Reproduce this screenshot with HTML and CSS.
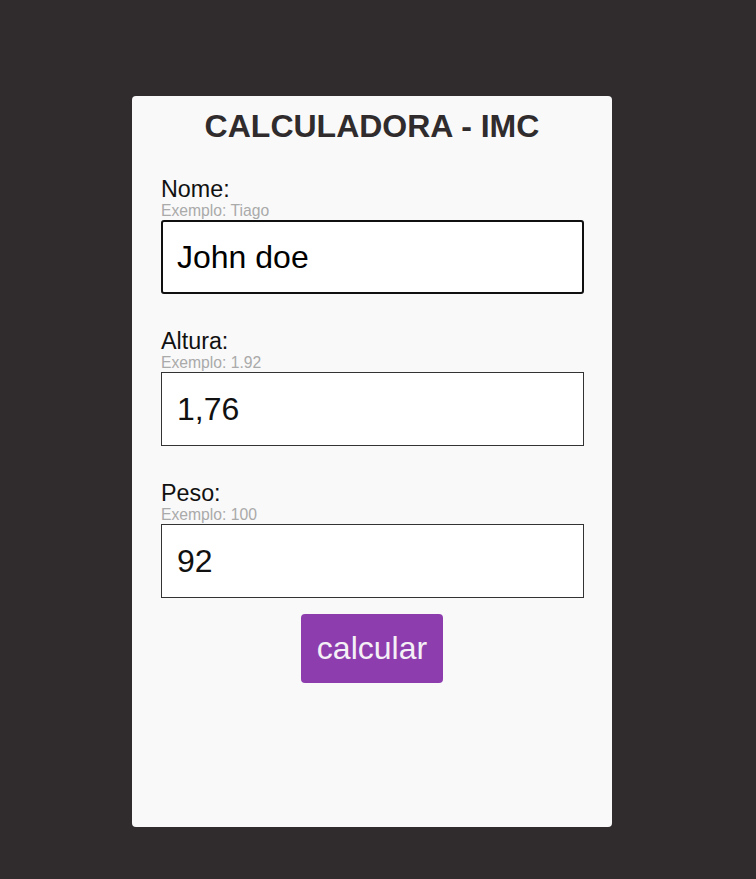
FILE: index.html
```html
<!DOCTYPE html>
<html lang="pt">
<head>
<meta charset="utf-8">
<title>Calculadora - IMC</title>
<link rel="stylesheet" href="styles.css">
</head>
<body>
<main class="card">
  <h1 class="title">CALCULADORA - IMC</h1>
  <form class="form">
    <div class="field">
      <label class="label" for="nome">Nome:</label>
      <small class="hint">Exemplo: Tiago</small>
      <input class="input input-focused" id="nome" type="text" value="John doe">
    </div>
    <div class="field">
      <label class="label" for="altura">Altura:</label>
      <small class="hint">Exemplo: 1.92</small>
      <input class="input" id="altura" type="text" value="1,76">
    </div>
    <div class="field field-last">
      <label class="label" for="peso">Peso:</label>
      <small class="hint">Exemplo: 100</small>
      <input class="input" id="peso" type="text" value="92">
    </div>
    <div class="actions">
      <button class="button" type="button">calcular</button>
    </div>
  </form>
</main>
</body>
</html>
```

FILE: styles.css
```css
html, body {
  margin: 0;
  padding: 0;
}

body {
  background: #302c2d;
  font-family: "Liberation Sans", Arial, sans-serif;
  padding: 96px 12px 52px 0;
  min-height: 879px;
  box-sizing: border-box;
}

.card {
  width: 480px;
  height: 731px;
  margin: 0 auto;
  box-sizing: border-box;
  background: #f9f9f9;
  border-radius: 4px;
  padding: 12px 28px 0 29px;
}

.title {
  margin: 0;
  font-size: 32px;
  line-height: 37px;
  font-weight: bold;
  text-align: center;
  color: #302c2d;
  padding-right: 1px;
}

.form {
  margin-top: 31px;
  display: flex;
  flex-direction: column;
}

.field {
  display: flex;
  flex-direction: column;
  margin-bottom: 34px;
}

.field-last {
  margin-bottom: 16px;
}

.label {
  font-size: 23.3px;
  line-height: 26px;
  color: #111;
}

.hint {
  font-size: 15.7px;
  line-height: 18px;
  color: #aaa;
}

.input {
  box-sizing: border-box;
  width: 423px;
  height: 74px;
  margin: 0;
  border: 1px solid #333;
  border-radius: 0;
  background: #fff;
  padding: 0 15px;
  font-family: "Liberation Sans", Arial, sans-serif;
  font-size: 32px;
  color: #111;
  outline: none;
}

.input-focused {
  border: 2px solid #101010;
  border-radius: 3px;
  padding: 0 14px;
  color: #000;
}

.actions {
  display: flex;
  justify-content: center;
  padding-right: 1px;
}

.button {
  border: none;
  border-radius: 4px;
  background: #8e3dae;
  color: #f4f0f6;
  font-family: "Liberation Sans", Arial, sans-serif;
  font-size: 32px;
  line-height: 37px;
  padding: 16px 16px;
  margin: 0;
  cursor: pointer;
}
```
